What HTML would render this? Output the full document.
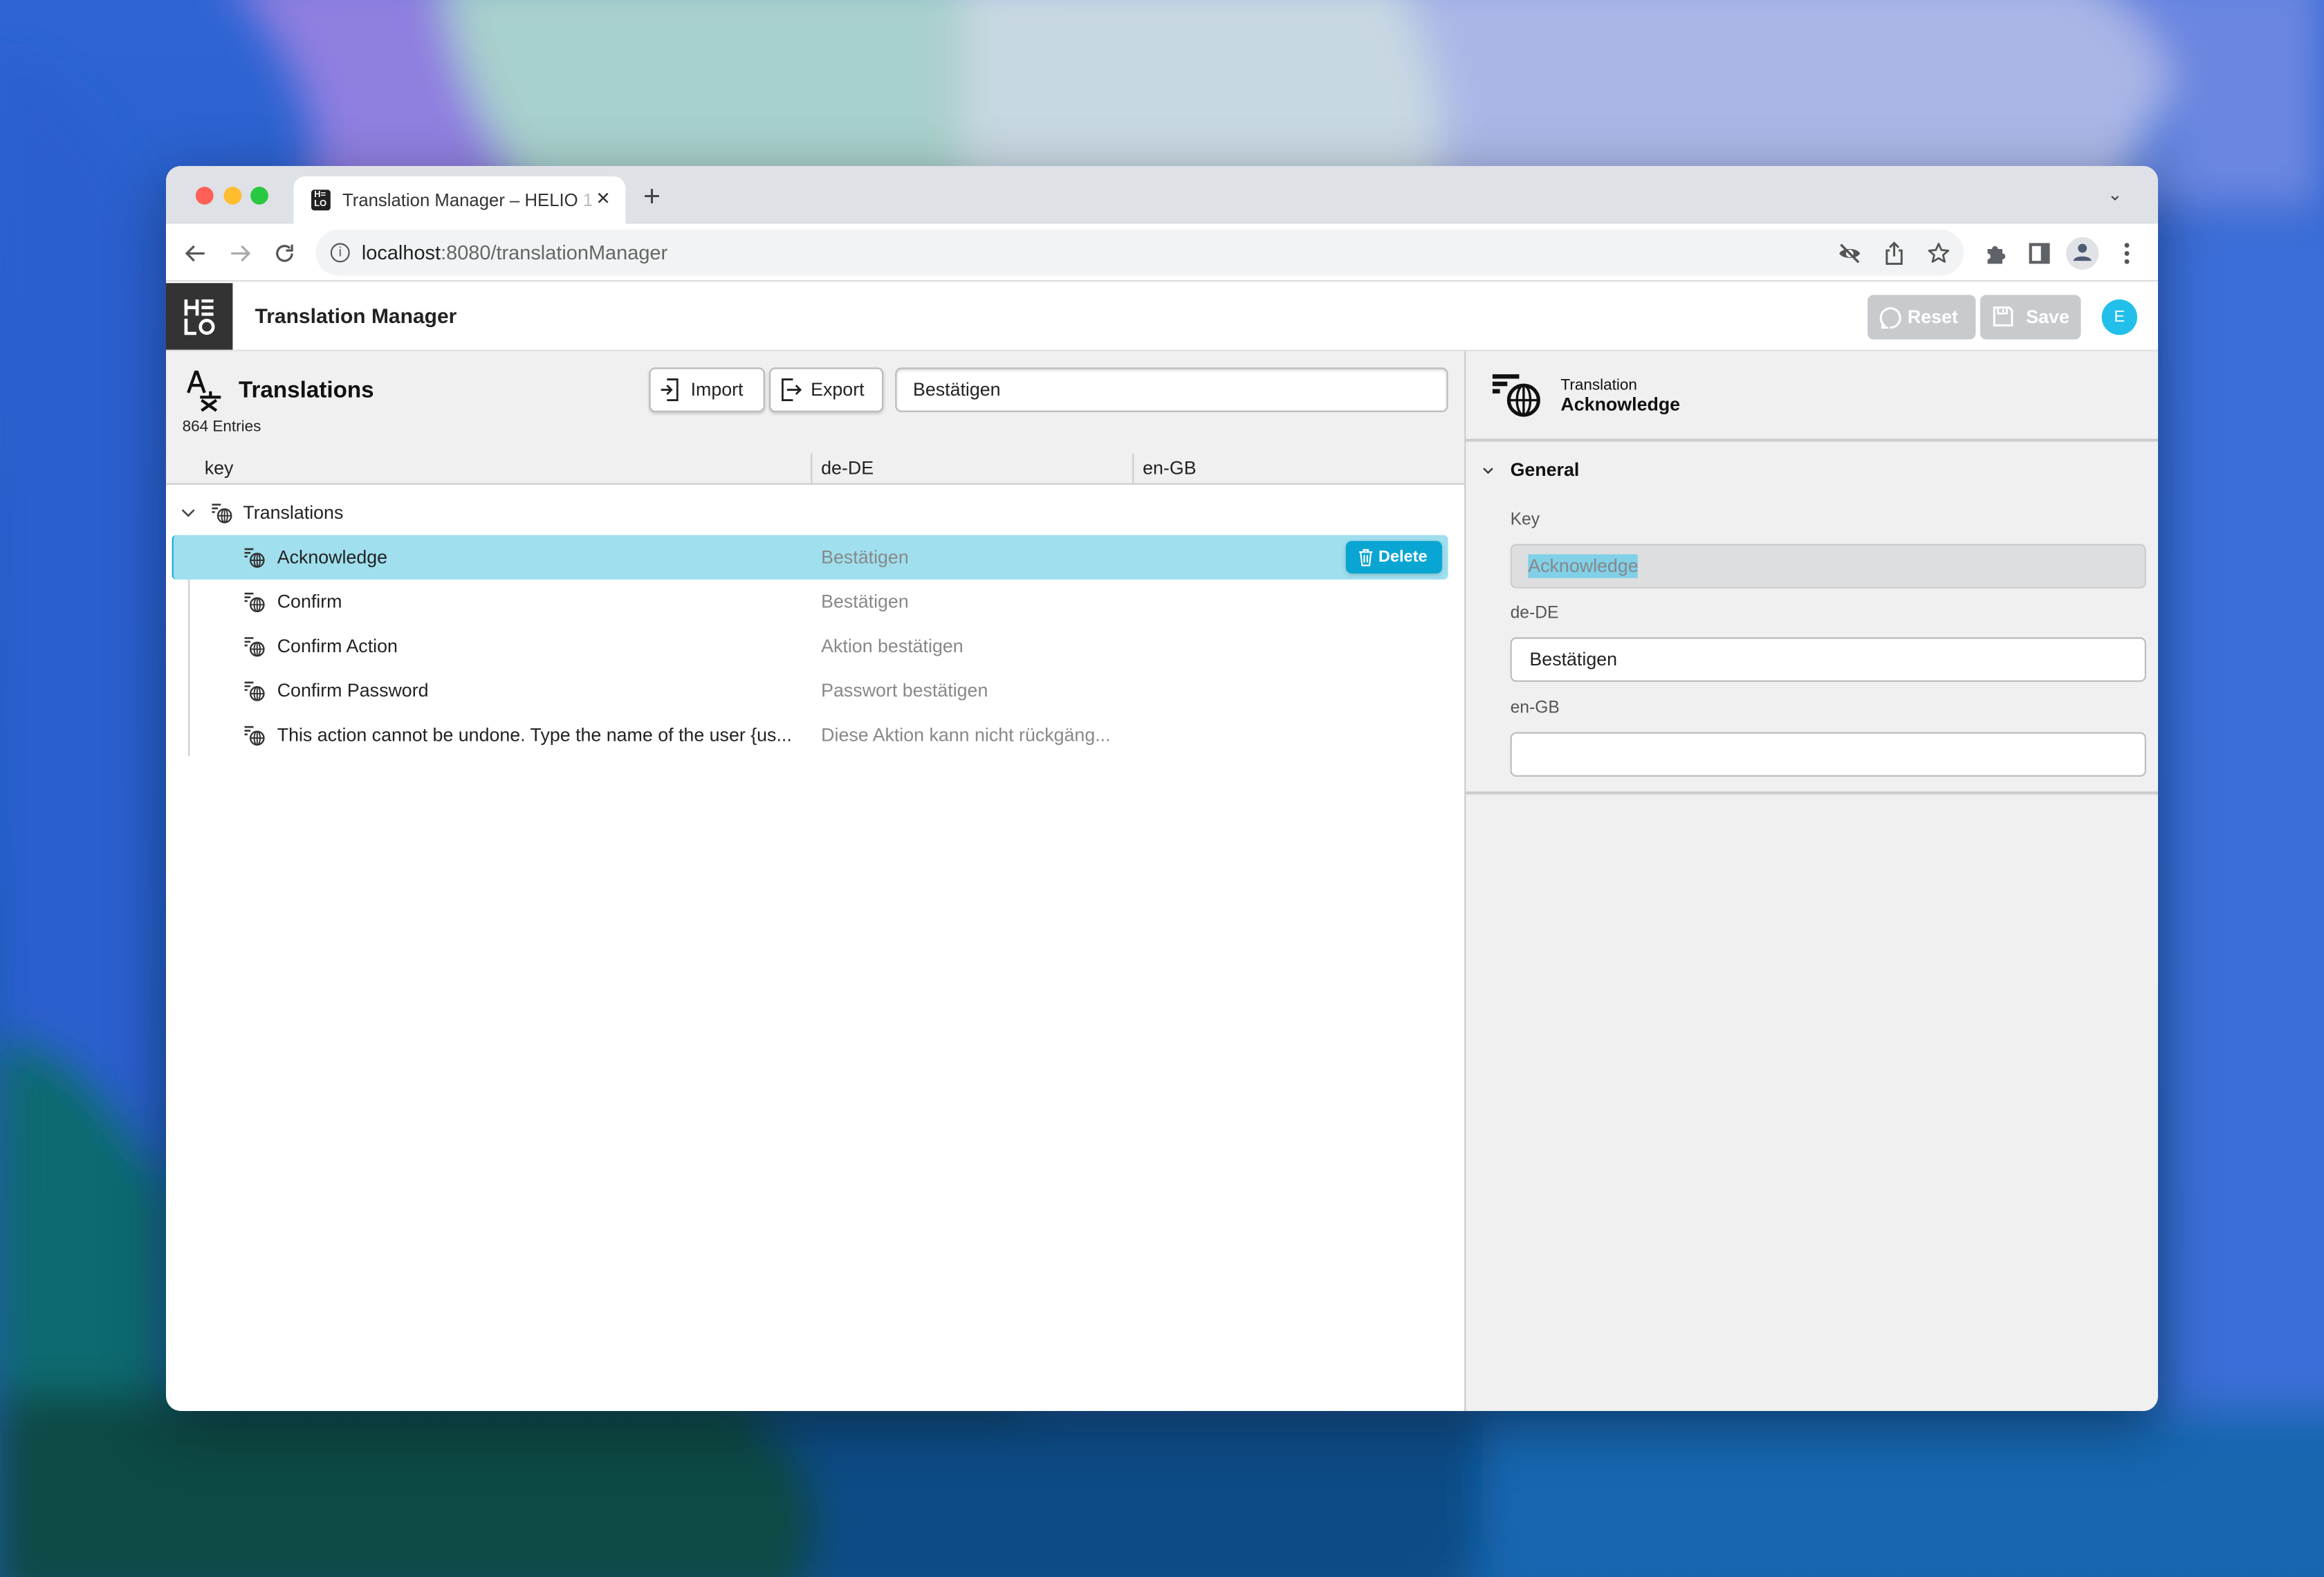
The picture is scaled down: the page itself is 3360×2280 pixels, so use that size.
<!DOCTYPE html>
<html><head><meta charset="utf-8">
<style>
*{margin:0;padding:0;box-sizing:border-box}
html,body{width:3360px;height:2280px;overflow:hidden}
body{font-family:"Liberation Sans",sans-serif;color:#222;background:#1e5bb8}
#s{position:absolute;left:0;top:0;width:1568px;height:1064px;transform:scale(2.142857);transform-origin:0 0}
.a{position:absolute}
.win{left:112px;top:112px;width:1344px;height:840px;border-radius:10px;overflow:hidden;background:#fff;box-shadow:0 10px 40px rgba(0,0,0,.35)}
.t{font-size:13px}
svg{display:block}
</style></head><body><div id="s">
<svg class="a" style="left:0;top:0" width="1568" height="1064" viewBox="0 0 1568 1064">
<defs>
<filter id="b" x="-20%" y="-20%" width="140%" height="140%"><feGaussianBlur stdDeviation="14"/></filter>
<linearGradient id="bg" x1="0" y1="0" x2="0" y2="1"><stop offset="0" stop-color="#2f64d4"/><stop offset=".5" stop-color="#1f5cc0"/><stop offset="1" stop-color="#145a9a"/></linearGradient>
</defs>
<rect width="1568" height="1064" fill="url(#bg)"/>
<g filter="url(#b)">
<path d="M0 40 C60 60 90 120 110 200 L110 1064 L0 1064Z" fill="#2a5fcf"/>
<path d="M150 -20 L330 -20 C330 60 340 100 360 140 L200 140 C230 100 200 40 150 -20Z" fill="#8f7fe0"/>
<path d="M300 -20 L720 -20 L720 140 L360 140 C330 90 300 40 300 -20Z" fill="#a8d0cc"/>
<path d="M650 -20 L1000 -20 L1000 140 L650 140Z" fill="#c8d8e2"/>
<path d="M940 -20 L1500 -20 C1480 40 1450 80 1430 140 L960 140 C990 80 960 30 940 -20Z" fill="#aab6e6"/>
<path d="M1400 -20 L1568 -20 L1568 140 L1440 140 C1470 80 1490 40 1400 -20Z" fill="#6a86e0"/>
<path d="M0 700 C50 700 90 760 112 800 L112 1064 L0 1064Z" fill="#0f6a70"/>
<path d="M0 940 L700 940 C600 1000 560 1030 560 1080 L0 1080Z" fill="#0b4a44"/>
<path d="M500 950 L1100 950 C1000 1000 1000 1040 980 1080 L540 1080 C560 1020 560 990 500 950Z" fill="#104c86"/>
<path d="M1000 950 L1600 950 L1600 1080 L1000 1080Z" fill="#1566b0"/>
<path d="M1456 150 L1600 150 L1600 950 L1456 950Z" fill="#3a6ed8"/>
</g>
</svg>
<div class="a win">
 <div class="a" style="left:0;top:0;width:1344px;height:39px;background:#dee1e6"></div>
 <div class="a" style="left:20px;top:14px;width:12px;height:12px;border-radius:6px;background:#fe5f57"></div>
 <div class="a" style="left:39px;top:14px;width:12px;height:12px;border-radius:6px;background:#febc2e"></div>
 <div class="a" style="left:57px;top:14px;width:12px;height:12px;border-radius:6px;background:#28c840"></div>
 <div class="a" style="left:86px;top:7px;width:224px;height:34px;background:#fff;border-radius:8px 8px 0 0"></div>
 <div class="a" style="left:98px;top:16px;width:13px;height:14px;background:#222;border-radius:2px;color:#fff;font-size:6px;line-height:6px;padding:1px 2px;font-weight:bold">H=<br>LO</div>
 <div class="a t" style="left:119px;top:16px;color:#333;font-size:12px;white-space:nowrap">Translation Manager – HELIO <span style="color:#bbb">1</span></div>
 <div class="a" style="left:290px;top:15px;font-size:12px;color:#333">✕</div>
 <div class="a" style="left:322px;top:10px;font-size:20px;color:#444">+</div>
 <div class="a" style="left:1310px;top:12px;font-size:12px;color:#444">⌄</div>
 <div class="a" style="left:0;top:39px;width:1344px;height:39px;background:#fff;border-bottom:1px solid #ddd"></div>
 <svg class="a" style="left:13px;top:52px" width="14" height="14" viewBox="0 0 14 14"><path d="M13 7H1M6 2L1 7l5 5" fill="none" stroke="#555" stroke-width="1.5"/></svg>
 <svg class="a" style="left:43px;top:52px" width="14" height="14" viewBox="0 0 14 14"><path d="M1 7h12M8 2l5 5-5 5" fill="none" stroke="#aaa" stroke-width="1.5"/></svg>
 <svg class="a" style="left:73px;top:52px" width="14" height="14" viewBox="0 0 14 14"><path d="M12 7a5 5 0 1 1-1.5-3.6" fill="none" stroke="#555" stroke-width="1.5"/><path d="M12 1v4H8" fill="none" stroke="#555" stroke-width="1.5"/></svg>
 <div class="a" style="left:101px;top:43px;width:1112px;height:31px;background:#f1f3f4;border-radius:16px"></div>
 <div class="a" style="left:111px;top:52px;width:13px;height:13px;border:1.4px solid #555;border-radius:7px;font-size:9px;text-align:center;line-height:10px;color:#555">i</div>
 <div class="a" style="left:132px;top:51px;font-size:13.5px;color:#222">localhost<span style="color:#666">:8080/translationManager</span></div>
 <svg class="a" style="left:1128px;top:51px" width="16" height="16" viewBox="0 0 16 16"><path d="M1 8c2-4 12-4 14 0c-2 4-12 4-14 0z" fill="#555"/><circle cx="8" cy="8" r="2.5" fill="#fff"/><path d="M2 2l12 12" stroke="#555" stroke-width="1.6"/></svg>
 <svg class="a" style="left:1159px;top:51px" width="14" height="16" viewBox="0 0 14 16"><path d="M4 6H2v9h10V6h-2M7 10V1M4 4l3-3 3 3" fill="none" stroke="#555" stroke-width="1.4"/></svg>
 <svg class="a" style="left:1188px;top:51px" width="16" height="16" viewBox="0 0 16 16"><path d="M8 1.5l1.9 4.2 4.6.4-3.5 3 1.1 4.5L8 11.2 3.9 13.6 5 9.1 1.5 6.1l4.6-.4z" fill="none" stroke="#555" stroke-width="1.3" stroke-linejoin="round"/></svg>
 <svg class="a" style="left:1226px;top:51px" width="16" height="16" viewBox="0 0 16 16"><path d="M3 5h3a2 2 0 1 1 4 0h3v3a2 2 0 1 1 0 4v3H3v-3a2 2 0 1 0 0-4z" fill="#5f6368"/></svg>
 <div class="a" style="left:1257px;top:52px;width:14px;height:14px;border:2px solid #5f6368;border-right-width:6px"></div>
 <div class="a" style="left:1282px;top:48px;width:22px;height:22px;border-radius:11px;background:#e0e2e6"></div>
 <svg class="a" style="left:1286px;top:51px" width="14" height="14" viewBox="0 0 14 14"><circle cx="7" cy="4.5" r="3" fill="#4f5b75"/><path d="M1 13c0-4 12-4 12 0z" fill="#4f5b75"/></svg>
 <svg class="a" style="left:1321px;top:51px" width="4" height="16" viewBox="0 0 4 16"><circle cx="2" cy="2.5" r="1.6" fill="#555"/><circle cx="2" cy="8" r="1.6" fill="#555"/><circle cx="2" cy="13.5" r="1.6" fill="#555"/></svg>
 <div class="a" style="left:0;top:79px;width:45px;height:45px;background:#333"></div>
 <svg class="a" style="left:12px;top:90px" width="22" height="24" viewBox="0 0 22 24"><path d="M1.5 0v11M9 0v11M1.5 5.5H9M12 1h8M12 5.5h8M12 10h8M1.5 13v10h7" fill="none" stroke="#fff" stroke-width="2.2"/><circle cx="15.5" cy="18.5" r="4.3" fill="none" stroke="#fff" stroke-width="2.2"/></svg>
 <div class="a" style="left:60px;top:93px;font-size:14px;font-weight:bold;color:#222">Translation Manager</div>
 <div class="a" style="left:1148px;top:87px;width:73px;height:30px;background:#c8cbce;border-radius:4px;color:#fff;font-weight:bold;font-size:12.5px;line-height:30px;padding-left:27px">Reset</div>
 <svg class="a" style="left:1155px;top:94px" width="16" height="16" viewBox="0 0 16 16"><path d="M5 14a6.5 6.5 0 1 1 3 1" fill="none" stroke="#fff" stroke-width="1.4"/><path d="M3 11v4h4" fill="none" stroke="#fff" stroke-width="1.4"/></svg>
 <div class="a" style="left:1224px;top:87px;width:68px;height:30px;background:#c8cbce;border-radius:4px;color:#fff;font-weight:bold;font-size:12.5px;line-height:30px;padding-left:31px">Save</div>
 <svg class="a" style="left:1232px;top:94px" width="15" height="15" viewBox="0 0 15 15"><path d="M1.5 1.5h10l2 2v10h-12z" fill="none" stroke="#fff" stroke-width="1.4"/><path d="M4 1.5v4h6v-4M7.5 2.5v2" fill="none" stroke="#fff" stroke-width="1.2"/></svg>
 <div class="a" style="left:1306px;top:90px;width:24px;height:24px;border-radius:12px;background:#22bfeb;color:#fff;font-size:11px;text-align:center;line-height:24px">E</div>
 <div class="a" style="left:0;top:124px;width:1344px;height:1px;background:#ddd"></div>
 <div class="a" style="left:0;top:125px;width:876px;height:90px;background:#f0f0f0;border-bottom:1.5px solid #ccc"></div>
 <svg class="a" style="left:14px;top:138px" width="26" height="28" viewBox="0 0 26 28"><path d="M1 15L6 1h1l5 14M3 10h7" fill="none" stroke="#111" stroke-width="2"/><path d="M9 18h14M16 14v4M10 20l10 7M20 20l-10 7" stroke="#111" stroke-width="2"/></svg>
 <div class="a" style="left:49px;top:143px;font-size:15.5px;font-weight:bold;color:#111">Translations</div>
 <div class="a" style="left:11px;top:170px;font-size:10.5px;color:#222">864 Entries</div>
 <div class="a" style="left:326px;top:136px;width:78px;height:30px;background:#fff;border:1px solid #bbb;border-radius:4px;box-shadow:0 1px 2px rgba(0,0,0,.2);font-size:12.5px;line-height:28px;padding-left:27px">Import</div>
 <svg class="a" style="left:333px;top:143px" width="14" height="16" viewBox="0 0 14 16"><path d="M5 1h7v14H5M1 8h7M5 5l3 3-3 3" fill="none" stroke="#222" stroke-width="1.3"/></svg>
 <div class="a" style="left:407px;top:136px;width:77px;height:30px;background:#fff;border:1px solid #bbb;border-radius:4px;box-shadow:0 1px 2px rgba(0,0,0,.2);font-size:12.5px;line-height:28px;padding-left:27px">Export</div>
 <svg class="a" style="left:414px;top:143px" width="16" height="16" viewBox="0 0 16 16"><path d="M9 1H2v14h7M5 8h9M11 5l3 3-3 3" fill="none" stroke="#222" stroke-width="1.3"/></svg>
 <div class="a" style="left:492px;top:136px;width:373px;height:30px;background:#fff;border:1px solid #bbb;border-radius:4px;box-shadow:inset 0 1px 2px rgba(0,0,0,.15);font-size:12.5px;line-height:28px;padding-left:11px">Bestätigen</div>
 <div class="a" style="left:26px;top:197px;font-size:12.5px">key</div>
 <div class="a" style="left:435px;top:194px;width:1px;height:20px;background:#ccc"></div>
 <div class="a" style="left:442px;top:197px;font-size:12.5px">de-DE</div>
 <div class="a" style="left:652px;top:194px;width:1px;height:20px;background:#ccc"></div>
 <div class="a" style="left:659px;top:197px;font-size:12.5px">en-GB</div>
 <svg class="a" style="left:10px;top:231px" width="10" height="7" viewBox="0 0 10 7"><path d="M1 1l4 4 4-4" fill="none" stroke="#444" stroke-width="1.2"/></svg>
 <svg class="a" style="left:30px;top:227px" width="15" height="15" viewBox="0 0 15 15"><path d="M1 1.5h6M1 4h4M1 6.5h2" stroke="#333" stroke-width="1.2"/><circle cx="9.5" cy="9" r="4.5" fill="none" stroke="#333" stroke-width="1.1"/><path d="M5 9h9M9.5 4.5v9" stroke="#333" stroke-width="0.9"/><ellipse cx="9.5" cy="9" rx="2" ry="4.5" fill="none" stroke="#333" stroke-width="0.9"/></svg>
 <div class="a" style="left:52px;top:227px;font-size:12.5px;color:#222">Translations</div>
 <div class="a" style="left:15px;top:249px;width:1px;height:149px;background:#ccc"></div>
 <div class="a" style="left:4px;top:249px;width:861px;height:30px;background:#9fdfee;border-radius:3px;border-left:1.5px solid #0ba8d6"></div>
 <div class="a" style="left:796px;top:253px;width:65px;height:22px;background:#0aa6d3;border-radius:4px;color:#fff;font-size:11px;font-weight:bold;line-height:22px;padding-left:22px;box-shadow:0 1px 3px rgba(0,0,0,.15)">Delete</div>
 <svg class="a" style="left:804px;top:258px" width="11" height="12" viewBox="0 0 11 12"><path d="M1 2.5h9M4 2.5V1h3v1.5M2 2.5l1 9h5l1-9M4.5 4.5v5M6.5 4.5v5" fill="none" stroke="#fff" stroke-width="1"/></svg>
 <div class="a" style="left:52px;top:257px"><svg width="15" height="15" viewBox="0 0 15 15"><path d="M1 1.5h6M1 4h4M1 6.5h2" stroke="#333" stroke-width="1.2"/><circle cx="9.5" cy="9" r="4.5" fill="none" stroke="#333" stroke-width="1.1"/><path d="M5 9h9M9.5 4.5v9" stroke="#333" stroke-width="0.9"/><ellipse cx="9.5" cy="9" rx="2" ry="4.5" fill="none" stroke="#333" stroke-width="0.9"/></svg></div>
 <div class="a" style="left:75px;top:257px;font-size:12.5px">Acknowledge</div>
 <div class="a" style="left:442px;top:257px;font-size:12.5px;color:#888">Bestätigen</div>
 <div class="a" style="left:52px;top:287px"><svg width="15" height="15" viewBox="0 0 15 15"><path d="M1 1.5h6M1 4h4M1 6.5h2" stroke="#333" stroke-width="1.2"/><circle cx="9.5" cy="9" r="4.5" fill="none" stroke="#333" stroke-width="1.1"/><path d="M5 9h9M9.5 4.5v9" stroke="#333" stroke-width="0.9"/><ellipse cx="9.5" cy="9" rx="2" ry="4.5" fill="none" stroke="#333" stroke-width="0.9"/></svg></div>
 <div class="a" style="left:75px;top:287px;font-size:12.5px">Confirm</div>
 <div class="a" style="left:442px;top:287px;font-size:12.5px;color:#888">Bestätigen</div>
 <div class="a" style="left:52px;top:317px"><svg width="15" height="15" viewBox="0 0 15 15"><path d="M1 1.5h6M1 4h4M1 6.5h2" stroke="#333" stroke-width="1.2"/><circle cx="9.5" cy="9" r="4.5" fill="none" stroke="#333" stroke-width="1.1"/><path d="M5 9h9M9.5 4.5v9" stroke="#333" stroke-width="0.9"/><ellipse cx="9.5" cy="9" rx="2" ry="4.5" fill="none" stroke="#333" stroke-width="0.9"/></svg></div>
 <div class="a" style="left:75px;top:317px;font-size:12.5px">Confirm Action</div>
 <div class="a" style="left:442px;top:317px;font-size:12.5px;color:#888">Aktion bestätigen</div>
 <div class="a" style="left:52px;top:347px"><svg width="15" height="15" viewBox="0 0 15 15"><path d="M1 1.5h6M1 4h4M1 6.5h2" stroke="#333" stroke-width="1.2"/><circle cx="9.5" cy="9" r="4.5" fill="none" stroke="#333" stroke-width="1.1"/><path d="M5 9h9M9.5 4.5v9" stroke="#333" stroke-width="0.9"/><ellipse cx="9.5" cy="9" rx="2" ry="4.5" fill="none" stroke="#333" stroke-width="0.9"/></svg></div>
 <div class="a" style="left:75px;top:347px;font-size:12.5px">Confirm Password</div>
 <div class="a" style="left:442px;top:347px;font-size:12.5px;color:#888">Passwort bestätigen</div>
 <div class="a" style="left:52px;top:377px"><svg width="15" height="15" viewBox="0 0 15 15"><path d="M1 1.5h6M1 4h4M1 6.5h2" stroke="#333" stroke-width="1.2"/><circle cx="9.5" cy="9" r="4.5" fill="none" stroke="#333" stroke-width="1.1"/><path d="M5 9h9M9.5 4.5v9" stroke="#333" stroke-width="0.9"/><ellipse cx="9.5" cy="9" rx="2" ry="4.5" fill="none" stroke="#333" stroke-width="0.9"/></svg></div>
 <div class="a" style="left:75px;top:377px;font-size:12.5px;white-space:nowrap;width:360px;overflow:hidden">This action cannot be undone. Type the name of the user {us...</div>
 <div class="a" style="left:442px;top:377px;font-size:12.5px;color:#888;white-space:nowrap">Diese Aktion kann nicht rückgäng...</div>
 <div class="a" style="left:876px;top:125px;width:468px;height:715px;background:#f0f0f0;border-left:1px solid #ccc"></div>
 <svg class="a" style="left:894px;top:140px" width="34" height="30" viewBox="0 0 34 30"><path d="M1 2h18M1 7h10M1 12h5" stroke="#111" stroke-width="3"/><circle cx="22" cy="18" r="10" fill="none" stroke="#111" stroke-width="2.4"/><path d="M12 18h20M22 8v20" stroke="#111" stroke-width="1.6"/><ellipse cx="22" cy="18" rx="4.5" ry="10" fill="none" stroke="#111" stroke-width="1.6"/></svg>
 <div class="a" style="left:941px;top:142px;font-size:10.5px;color:#111">Translation</div>
 <div class="a" style="left:941px;top:154px;font-size:12.5px;font-weight:bold;color:#111">Acknowledge</div>
 <div class="a" style="left:877px;top:184px;width:467px;height:1.5px;background:#ccc"></div>
 <svg class="a" style="left:888px;top:203px" width="8" height="6" viewBox="0 0 8 6"><path d="M1 1l3 3 3-3" fill="none" stroke="#333" stroke-width="1.1"/></svg>
 <div class="a" style="left:907px;top:198px;font-size:12.5px;font-weight:bold;color:#111">General</div>
 <div class="a" style="left:907px;top:233px;font-size:11.5px;color:#555">Key</div>
 <div class="a" style="left:907px;top:255px;width:429px;height:30px;background:#dddee0;border:1px solid #ccc;border-radius:4px"></div>
 <div class="a" style="left:919px;top:262px;font-size:12.5px;color:#888;background:#80d0e8;line-height:16px">Acknowledge</div>
 <div class="a" style="left:907px;top:296px;font-size:11.5px;color:#555">de-DE</div>
 <div class="a" style="left:907px;top:318px;width:429px;height:30px;background:#fff;border:1px solid #bbb;border-radius:4px;font-size:12.5px;line-height:28px;padding-left:12px;color:#222">Bestätigen</div>
 <div class="a" style="left:907px;top:360px;font-size:11.5px;color:#555">en-GB</div>
 <div class="a" style="left:907px;top:382px;width:429px;height:30px;background:#fff;border:1px solid #bbb;border-radius:4px"></div>
 <div class="a" style="left:877px;top:422px;width:467px;height:1.5px;background:#ccc"></div>
</div>
</div></body></html>
